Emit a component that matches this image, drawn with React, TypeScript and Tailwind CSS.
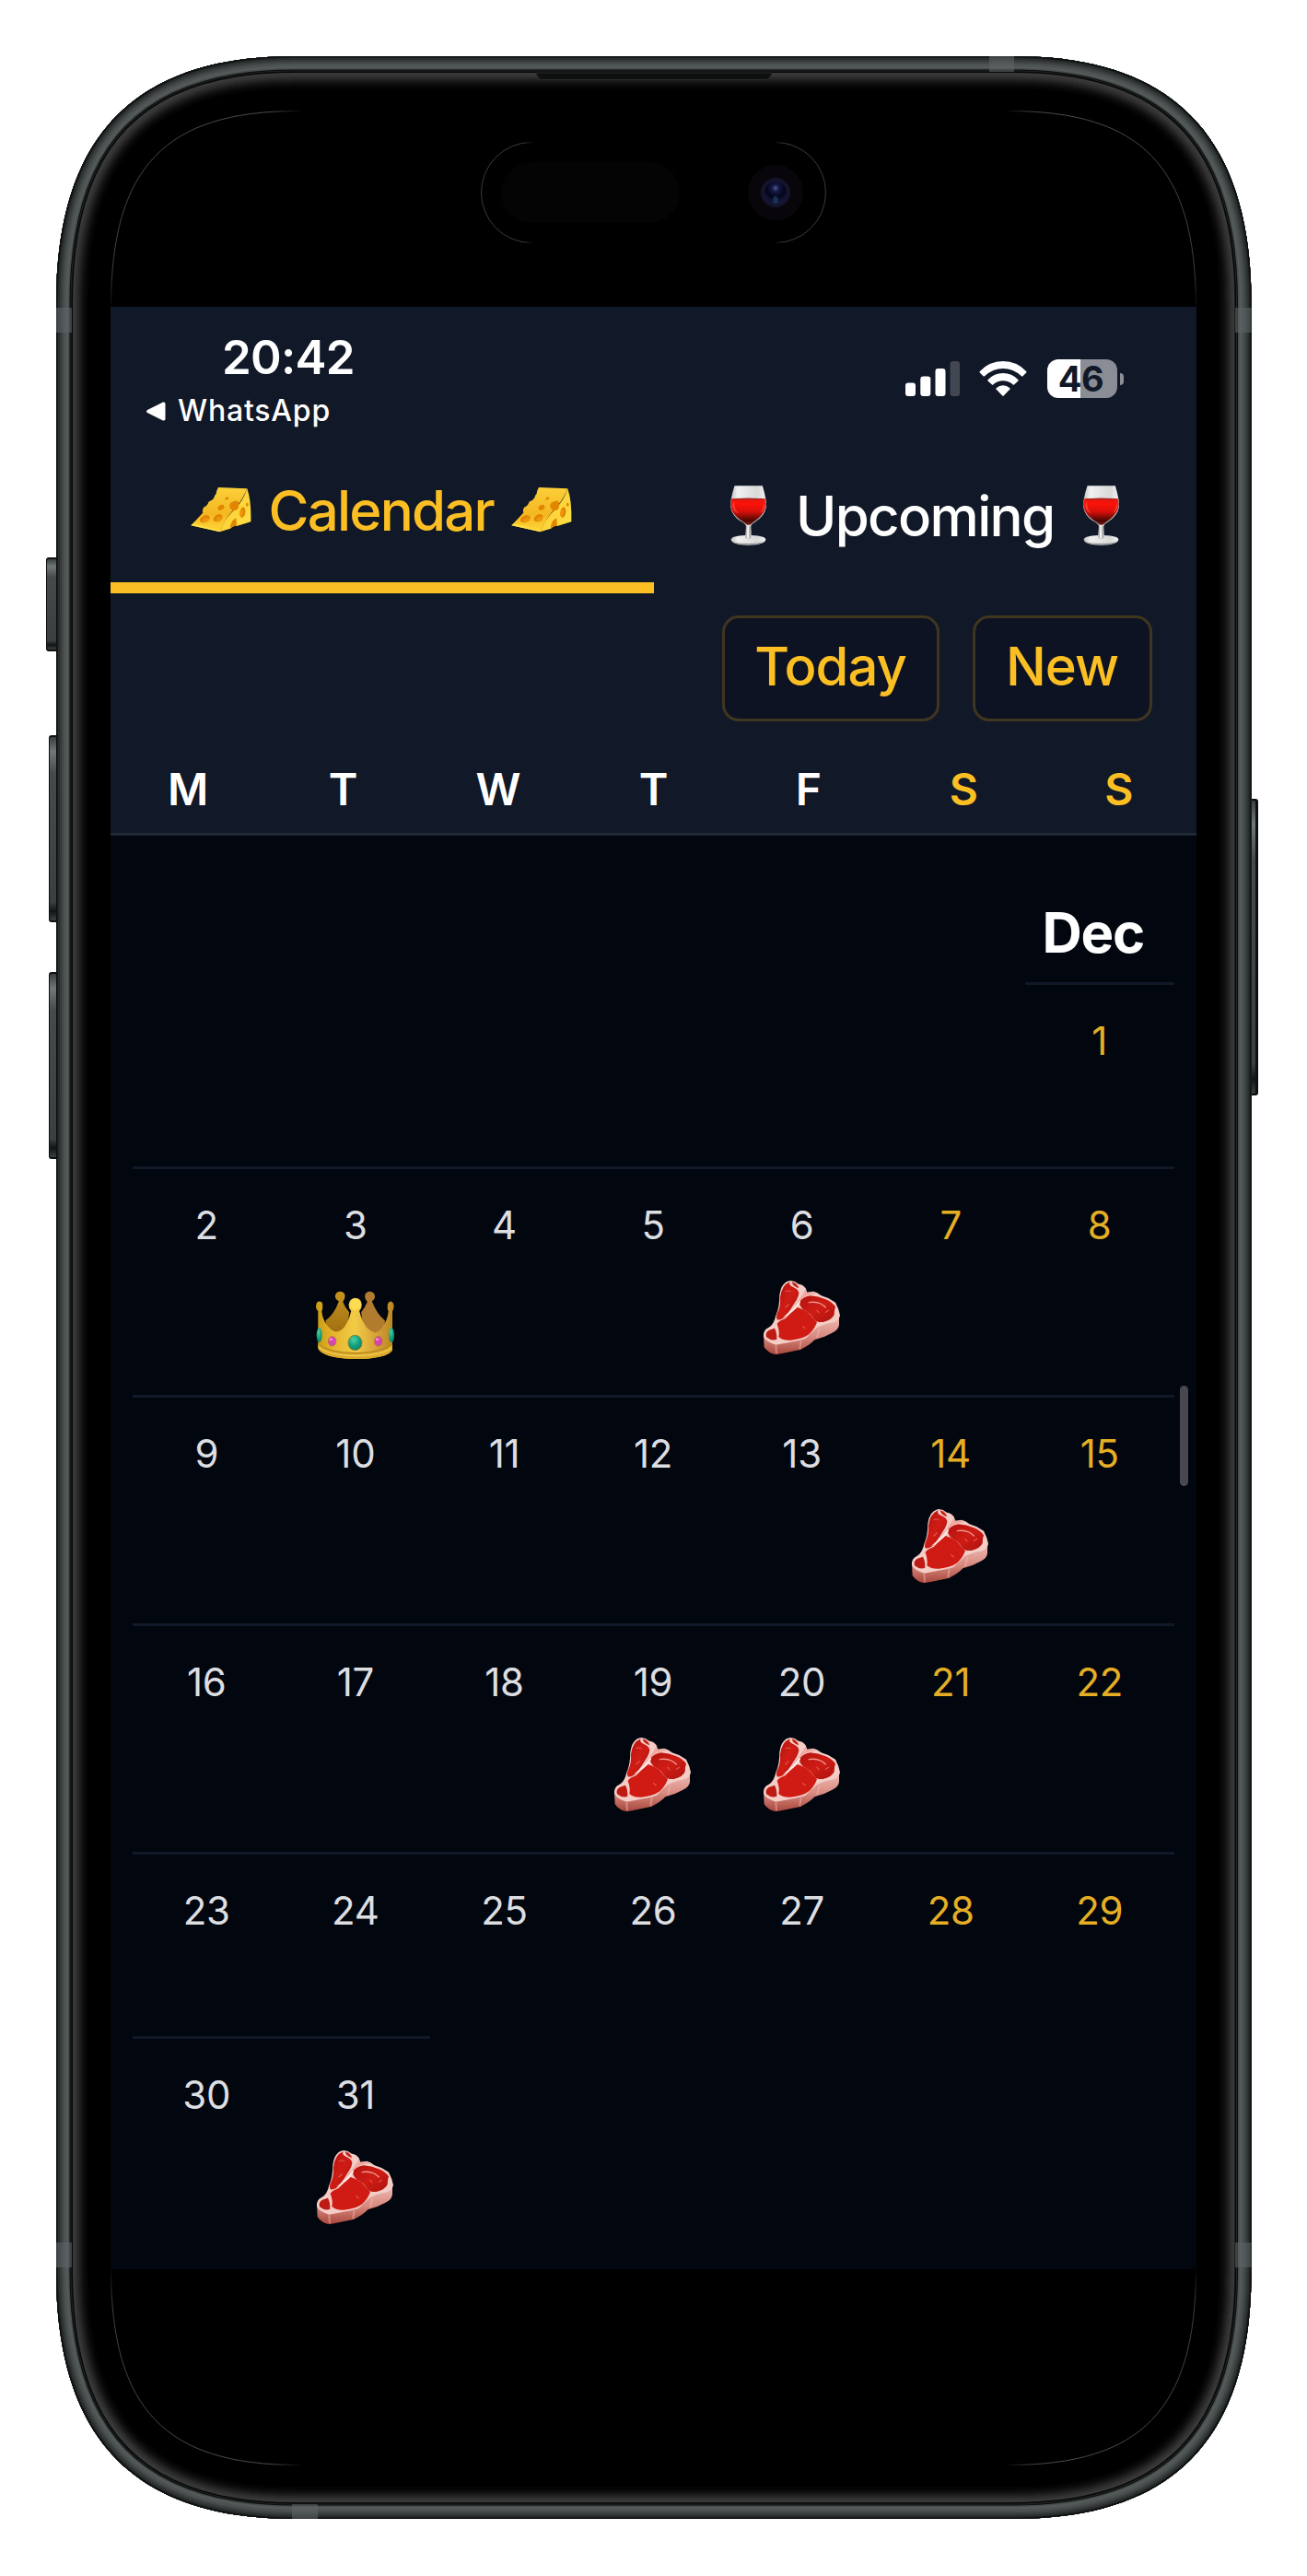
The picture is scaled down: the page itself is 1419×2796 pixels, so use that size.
import React from "react";

/* ---------- emoji style drawings ---------- */

function Cheese() {
  return (
    <svg className="h-[51px] w-[68px] shrink-0" viewBox="18 42 204 152" preserveAspectRatio="none">
      <defs>
        <linearGradient id="ch1" x1="0" y1="0" x2="0" y2="1">
          <stop offset="0" stopColor="#fbd03a" />
          <stop offset=".6" stopColor="#f5b721" />
          <stop offset="1" stopColor="#ffd737" />
        </linearGradient>
        <linearGradient id="ch2" x1="0" y1="0" x2="1" y2="1">
          <stop offset="0" stopColor="#fdc52b" />
          <stop offset="1" stopColor="#ffe24a" />
        </linearGradient>
      </defs>
      <path d="M111 45L205 49Q190 88 160 118Q135 142 116 189L22 168Q40 150 61 127Q57 120 64 109Q75 106 80 91Q94 86 98 76Q98 72 104 66Q104 58 107 53Z" fill="url(#ch1)" />
      <path d="M205 49Q219 90 217 156L171 170Q160 168 150 178L116 189Q130 148 160 120Q192 90 205 49Z" fill="url(#ch2)" />
      <path d="M22 168L116 189L118 184L30 162Z" fill="#ffdf45" />
      <g fill="#e08600">
        <ellipse cx="67" cy="147" rx="17" ry="11" transform="rotate(-25 67 147)" />
        <ellipse cx="110" cy="144" rx="16" ry="11" transform="rotate(-28 110 144)" />
        <ellipse cx="120" cy="110" rx="11" ry="8" transform="rotate(-30 120 110)" />
        <ellipse cx="139" cy="81" rx="6" ry="4" transform="rotate(-25 139 81)" />
        <path d="M147 104Q150 90 172 88Q182 96 175 114Q165 124 155 118Q147 113 147 104Z" />
        <ellipse cx="190" cy="126" rx="9" ry="17" transform="rotate(10 190 126)" />
        <ellipse cx="205" cy="101" rx="4" ry="6" />
        <path d="M150 172Q152 152 169 144L171 170Q160 167 150 178Z" />
      </g>
      <g fill="#ee9510">
        <ellipse cx="70" cy="151" rx="12" ry="7" transform="rotate(-25 70 151)" />
        <ellipse cx="113" cy="148" rx="11" ry="7" transform="rotate(-28 113 148)" />
        <ellipse cx="187" cy="128" rx="5" ry="12" transform="rotate(10 187 128)" />
      </g>
    </svg>
  );
}

function Wine() {
  return (
    <svg className="h-[67px] w-[41px] shrink-0" viewBox="235 588 104 202" preserveAspectRatio="none">
      <defs>
        <linearGradient id="wg" x1="0" x2="1">
          <stop offset="0" stopColor="#bdbdbd" />
          <stop offset=".2" stopColor="#f1f1f1" />
          <stop offset=".75" stopColor="#d9d9d9" />
          <stop offset="1" stopColor="#f2f2f2" />
        </linearGradient>
        <linearGradient id="wr" x1="0" y1="0" x2="0" y2="1">
          <stop offset="0" stopColor="#e8150d" />
          <stop offset=".2" stopColor="#fb1208" />
          <stop offset=".5" stopColor="#d81009" />
          <stop offset=".85" stopColor="#480603" />
          <stop offset="1" stopColor="#7a1512" />
        </linearGradient>
      </defs>
      <path d="M249 592H326Q338 640 336 662Q332 690 306 710Q296 716 294 724L295 754Q334 756 335 768Q332 785 287 786Q242 785 239 768Q241 756 279 754L281 724Q279 716 266 708Q242 690 238 662Q236 640 249 592Z" fill="url(#wg)" />
      <path d="M238 650Q240 690 281 719H293Q334 690 336 650L330 636H243Z" fill="#74605f" />
      <path d="M241 634H333Q336 655 333 668Q326 690 304 706Q294 714 292 719H283Q280 713 268 705Q246 690 241 668Q238 655 241 634Z" fill="url(#wr)" />
      <ellipse cx="287" cy="635" rx="46" ry="3" fill="#a32a25" />
      <path d="M248 644Q246 668 260 682Q252 680 245 664Q242 652 248 644Z" fill="#ff7066" opacity=".6" />
      <path d="M329 644Q331 664 320 680Q328 676 332 660Z" fill="#ff7066" opacity=".6" />
      <path d="M280 724L279 762Q287 770 295 762L293 724Z" fill="#8f8f8f" opacity=".6" />
      <path d="M284 724L283 764H289L288 724Z" fill="#f4f4f4" />
      <path d="M240 773Q250 784 287 785Q326 784 334 773Q320 781 287 781Q254 781 240 773Z" fill="#8a8a8a" />
    </svg>
  );
}

function Crown() {
  return (
    <svg className="mt-[86px] mr-[2px] h-[75px] w-[87px]" viewBox="124 124 262 226" preserveAspectRatio="none">
      <defs>
        <linearGradient id="cr1" x1="0" x2="1">
          <stop offset="0" stopColor="#c99a12" />
          <stop offset=".2" stopColor="#e3b32c" />
          <stop offset=".5" stopColor="#f2cb45" />
          <stop offset=".8" stopColor="#d39d36" />
          <stop offset="1" stopColor="#b98620" />
        </linearGradient>
        <linearGradient id="cr2" x1="0" y1="0" x2="0" y2="1">
          <stop offset="0" stopColor="#c79420" />
          <stop offset="1" stopColor="#a06f10" />
        </linearGradient>
        <radialGradient id="cg" cx=".4" cy=".3" r=".8">
          <stop offset="0" stopColor="#4fd0a4" />
          <stop offset=".5" stopColor="#14a27c" />
          <stop offset="1" stopColor="#0c7a60" />
        </radialGradient>
      </defs>
      <path d="M158 222Q188 200 202 158Q190 152 190 142Q191 127 206 126Q222 127 222 142Q222 152 215 160Q222 178 236 194L228 260H165Z" fill="url(#cr2)" />
      <path d="M353 222Q326 200 310 158Q320 152 320 142Q318 127 303 126Q288 127 287 142Q287 152 295 160Q288 178 275 194L284 260H348Z" fill="#b17c2e" />
      <path d="M134 190Q127 186 127 175Q128 159 139 159Q150 160 149 176Q149 186 146 191Q148 214 160 232Q176 256 192 258Q226 256 242 190Q234 182 234 170Q236 149 256 147Q276 149 277 170Q277 182 269 190Q286 256 322 260Q338 258 350 234Q362 214 364 191Q360 184 361 174Q362 160 371 159Q381 160 382 175Q381 186 377 191L377 318Q360 346 255 347Q148 344 134 312Z" fill="url(#cr1)" />
      <path d="M134 296Q160 326 256 328Q350 326 377 298V318Q360 346 255 347Q148 344 134 312Z" fill="#dcaa2b" />
      <path d="M134 296Q160 326 256 328Q350 326 377 298" fill="none" stroke="#a87914" strokeWidth="3" />
      <path d="M137 310Q170 336 256 337Q345 335 374 312" fill="none" stroke="#f7d862" strokeWidth="3" />
      <circle cx="256" cy="168" r="19" fill="#fbdc52" />
      <ellipse cx="255" cy="294" rx="23" ry="25" fill="url(#cg)" stroke="#a87a18" strokeWidth="2" />
      <ellipse cx="138" cy="269" rx="9" ry="24" fill="url(#cg)" />
      <ellipse cx="374" cy="269" rx="9" ry="24" fill="url(#cg)" />
      <ellipse cx="180" cy="289" rx="13" ry="16" fill="#d944b4" stroke="#a8731c" strokeWidth="2" />
      <ellipse cx="331" cy="289" rx="13" ry="16" fill="#d944b4" stroke="#a8731c" strokeWidth="2" />
      <ellipse cx="176" cy="283" rx="5" ry="4" fill="#f29bdc" />
      <ellipse cx="327" cy="283" rx="5" ry="4" fill="#f29bdc" />
    </svg>
  );
}

function Steak() {
  return (
    <svg className="mt-[74px] mr-[2px] h-[82px] w-[85px]" viewBox="85 90 255 246" preserveAspectRatio="none">
      <defs>
        <linearGradient id="st1" x1="0" y1="0" x2="0" y2="1">
          <stop offset="0" stopColor="#f2c2bb" />
          <stop offset=".55" stopColor="#d88a80" />
          <stop offset="1" stopColor="#a8463c" />
        </linearGradient>
        <linearGradient id="st2" x1="0" y1="0" x2="1" y2="1">
          <stop offset="0" stopColor="#b3120e" />
          <stop offset=".5" stopColor="#cf1c15" />
          <stop offset="1" stopColor="#ad130e" />
        </linearGradient>
      </defs>
      <path d="M88 270L90 310Q104 330 128 334Q160 328 208 318Q240 302 254 286Q286 278 310 264Q334 252 334 236V206L240 200Z" fill="url(#st1)" />
      <path d="M176 93Q190 94 202 104Q218 106 225 118L230 131L250 128Q262 130 276 142Q300 148 322 164Q334 186 337 206Q334 224 312 230Q290 232 262 246Q242 264 224 282Q200 290 160 296L128 302Q98 294 88 276Q86 254 104 246Q122 236 128 206Q140 180 140 140Q146 96 176 93Z" fill="#f3cdc6" />
      <path d="M174 97Q168 108 184 114Q200 120 203 132Q203 146 189 166Q176 188 162 206Q148 222 132 220Q126 210 136 192Q144 172 142 148Q146 108 174 97Z" fill="url(#st2)" />
      <path d="M180 97Q198 102 203 118Q192 114 184 107Z" fill="#c2241b" />
      <path d="M204 162Q214 147 240 142Q266 144 290 154Q308 160 322 178Q318 190 318 204Q312 220 282 228Q260 230 252 218Q238 196 218 188Q206 178 204 162Z" fill="url(#st2)" />
      <path d="M198 180Q224 188 238 202Q250 218 262 228Q256 248 236 268Q214 284 176 287Q148 288 137 276Q141 258 132 234Q138 224 158 217Q180 194 198 180Z" fill="#d01b14" />
      <path d="M124 248Q132 262 131 284Q114 291 97 277Q92 262 106 254Z" fill="#bd1b14" />
      <path d="M224 122Q216 140 190 170L166 202Q194 180 210 156Q226 138 258 136L250 130L230 132Z" fill="#f0aaa1" />
      <path d="M206 156Q186 184 150 214Q188 196 208 164Z" fill="#fbe6e2" />
      <path d="M236 164Q256 160 274 168Q284 174 290 180" fill="none" stroke="#f0988e" strokeWidth="4" strokeLinecap="round" />
      <path d="M160 128Q168 124 176 128M160 180L170 170M262 190L268 198M216 242L224 248M290 196L300 190" fill="none" stroke="#e2574b" strokeWidth="3.500" strokeLinecap="round" />
      <path d="M128 304L130 330M210 288L206 316M270 248L262 280" stroke="#f3b5ac" strokeWidth="6" opacity=".5" />
    </svg>
  );
}

/* ---------- phone hardware ---------- */

function squircle(l: number, t: number, r: number, b: number, lx: number, ly: number, c: number) {
  return `M${l + lx} ${t}H${r - lx}C${r - c} ${t} ${r} ${t + c} ${r} ${t + ly}V${b - ly}C${r} ${b - c} ${r - c} ${b} ${r - lx} ${b}H${l + lx}C${l + c} ${b} ${l} ${b - c} ${l} ${b - ly}V${t + ly}C${l} ${t + c} ${l + c} ${t} ${l + lx} ${t}Z`;
}

const OUTER = squircle(61, 61, 1358.5, 2734, 258, 268, 86);
const INNER = squircle(78, 78.5, 1341.5, 2717, 238, 248, 80);
const RIM: [number, string][] = [
  [36, "#060707"],
  [33, "#222424"],
  [31, "#0b0c0c"],
  [29, "#474c4c"],
  [26, "#54595a"],
  [21, "#4c5152"],
  [16, "#414647"],
  [12, "#363a3b"],
  [8, "#292d2d"],
  [4, "#191c1c"],
  [2, "#0d0f0f"],
];

function SideButton({ x, y, w, h }: { x: number; y: number; w: number; h: number }) {
  return (
    <g>
      <rect x={x} y={y} width={w + 4} height={h} rx="3" fill="#0d1010" />
      <rect x={x + 1} y={y + 2} width={w} height={h - 4} rx="2" fill="url(#btn)" />
    </g>
  );
}

function Hardware() {
  return (
    <svg className="absolute inset-0" width="1419" height="2796" viewBox="0 0 1419 2796" aria-hidden="true">
      <defs>
        <clipPath id="co"><path d={OUTER} /></clipPath>
        <clipPath id="ci"><path d={INNER} /></clipPath>
        <filter id="gl" x="-5%" y="-5%" width="110%" height="110%"><feGaussianBlur stdDeviation="6" /></filter>
        <linearGradient id="btn" x1="0" y1="0" x2="0" y2="1">
          <stop offset="0" stopColor="#3a4041" />
          <stop offset=".08" stopColor="#70787a" />
          <stop offset=".2" stopColor="#454b4c" />
          <stop offset=".9" stopColor="#3a4041" />
          <stop offset=".95" stopColor="#121515" />
          <stop offset="1" stopColor="#3a4041" />
        </linearGradient>
        <linearGradient id="tl" gradientUnits="userSpaceOnUse" x1="0" y1="120" x2="0" y2="2676">
          <stop offset="0" stopColor="#4a4a4a" />
          <stop offset=".07" stopColor="#3c3c3c" />
          <stop offset=".085" stopColor="#000" />
          <stop offset=".915" stopColor="#000" />
          <stop offset=".93" stopColor="#3c3c3c" />
          <stop offset="1" stopColor="#4a4a4a" />
        </linearGradient>
        <linearGradient id="fadeOut" x1="0" x2="1">
          <stop offset="0" stopColor="#000" stopOpacity="0" />
          <stop offset=".04" stopColor="#000" />
          <stop offset=".96" stopColor="#000" />
          <stop offset="1" stopColor="#000" stopOpacity="0" />
        </linearGradient>
        <radialGradient id="lens" cx=".5" cy=".3" r=".7">
          <stop offset="0" stopColor="#4a5390" />
          <stop offset=".25" stopColor="#12163f" />
          <stop offset=".6" stopColor="#040519" />
          <stop offset="1" stopColor="#171a45" />
        </radialGradient>
      </defs>
      <SideButton x={50} y={605} w={11} h={102} />
      <SideButton x={53} y={798} w={8} h={203} />
      <SideButton x={53} y={1055} w={8} h={203} />
      <SideButton x={1354} y={867} w={8} h={322} />
      <path d={OUTER} fill="#000" />
      <g clipPath="url(#ci)">
        <path d={INNER} fill="none" stroke="#454545" strokeWidth="16" filter="url(#gl)" />
      </g>
      <g clipPath="url(#co)">
        {RIM.map(([w, c]) => (
          <path key={w} d={OUTER} fill="none" stroke={c} strokeWidth={w} />
        ))}
        <g fill="#5f6667" opacity=".55">
          <rect x="1074" y="61" width="27" height="17" />
          <rect x="317" y="2718" width="28" height="17" />
          <rect x="61" y="334" width="17" height="27" />
          <rect x="1341" y="334" width="18" height="27" />
          <rect x="61" y="2434" width="17" height="27" />
          <rect x="1341" y="2434" width="18" height="27" />
        </g>
      </g>
      <path d="M582 79Q584 86 588 86.500H832Q836 86 838 79Z" fill="#0e0f0f" stroke="#2b2b2b" strokeWidth="1" />
      <path d={squircle(120.5, 120.5, 1298.5, 2675.5, 203, 213, 60)} fill="none" stroke="url(#tl)" strokeWidth="1" />
      <rect x="295" y="118" width="829" height="5" fill="url(#fadeOut)" />
      <rect x="295" y="2673" width="829" height="5" fill="url(#fadeOut)" />
      <rect x="522.5" y="154.500" width="374" height="109" rx="54.500" fill="#000" stroke="#3c3c3c" />
      <rect x="568" y="152" width="283" height="114" fill="url(#fadeOut)" />
      <rect x="544" y="176" width="194" height="66" rx="33" fill="#040404" />
      <circle cx="842" cy="209" r="30" fill="#08060a" />
      <circle cx="842" cy="209" r="16" fill="#14152c" />
      <circle cx="842" cy="209" r="12" fill="url(#lens)" />
      <ellipse cx="842" cy="217" rx="3" ry="4" fill="#1c3a5c" opacity=".8" />
    </svg>
  );
}

/* ---------- screen ---------- */

function StatusBar() {
  return (
    <div className="flex h-[142px] justify-between">
      <div className="flex flex-col">
        <div className="mt-[29px] ml-[121px] text-[51px] leading-[52px] font-semibold tracking-[-0.7px]">20:42</div>
        <div className="mt-[15px] ml-[38px] flex h-[34px] items-center gap-[13px]">
          <svg className="h-[21px] w-[22px]" viewBox="0 0 22 21">
            <path d="M2 9Q0 10.500 2 12L19 20.500Q21.500 21 21.500 18.500V2.500Q21.500 0 19 .5Z" fill="#fff" />
          </svg>
          <span className="text-[32px] leading-[32px] font-medium tracking-[0.8px]">WhatsApp</span>
        </div>
      </div>
      <div className="mt-[57px] mr-[79px] flex h-[42px] items-center">
        <svg className="h-[38px] w-[59px]" viewBox="0 0 59 38">
          <rect x="0" y="23.500" width="11" height="14.500" rx="3" fill="#fff" />
          <rect x="16.300" y="16.500" width="11" height="21.500" rx="3" fill="#fff" />
          <rect x="32.500" y="8" width="11" height="30" rx="3" fill="#fff" />
          <rect x="48.500" y="0" width="10.500" height="38" rx="3" fill="#434751" />
        </svg>
        <svg className="ml-[21px] h-[38px] w-[52px]" viewBox="0 0 52 38">
          <g fill="#fff">
            <path d="M.6 11.200Q11 0 26 0T51.400 11.200Q51.800 12 51.200 12.600L47.200 16.400Q46.600 16.800 46 16.200Q37 8 26 8T6 16.200Q5.400 16.800 4.800 16.400L.8 12.600Q.2 12 .6 11.200Z" />
            <path d="M9.500 20.200Q16.500 13 26 13T42.500 20.200Q42.900 20.800 42.400 21.400L38 25.600Q37.400 26 36.800 25.500Q32 21.300 26 21.300T15.200 25.500Q14.600 26 14 25.600L9.600 21.400Q9.100 20.800 9.500 20.200Z" />
            <path d="M18.600 29.300Q22 26.300 26 26.300T33.400 29.300Q33.900 29.900 33.400 30.500L26.700 37.400Q26 38 25.300 37.400L18.600 30.500Q18.100 29.900 18.600 29.300Z" />
          </g>
        </svg>
        <div className="ml-[22px] flex h-[42px] w-[76px] items-center justify-center rounded-[12px] bg-[linear-gradient(to_right,#fff_47%,#8b8d96_47%)] pr-[2px] text-[38px] leading-[42px] font-bold tracking-[-0.5px] text-[#111827]">
          46
        </div>
        <div className="ml-[3px] h-[13px] w-[4.5px] rounded-r-full bg-[#8b8d96]" />
      </div>
    </div>
  );
}

const WEEKDAYS = ["M", "T", "W", "T", "F", "S", "S"];
const EVENTS: Record<number, "crown" | "steak"> = { 3: "crown", 6: "steak", 14: "steak", 19: "steak", 20: "steak", 31: "steak" };
const WEEKS: { days: (number | null)[]; tall: boolean }[] = [
  { days: [null, null, null, null, null, null, 1], tall: false },
  { days: [2, 3, 4, 5, 6, 7, 8], tall: true },
  { days: [9, 10, 11, 12, 13, 14, 15], tall: true },
  { days: [16, 17, 18, 19, 20, 21, 22], tall: true },
  { days: [23, 24, 25, 26, 27, 28, 29], tall: false },
  { days: [30, 31, null, null, null, null, null], tall: true },
];

function Day({ n, weekend }: { n: number; weekend: boolean }) {
  const ev = EVENTS[n];
  return (
    <div className="flex flex-col items-center border-t-3 border-[#111827] pt-[40px]">
      <span className={`mr-px h-[6px] text-[42px] leading-[42px] tracking-[-0.3px] ${weekend ? "text-[#e5ae24]" : "text-[#dddee1]"}`}>{n}</span>
      {ev === "crown" && <Crown />}
      {ev === "steak" && <Steak />}
    </div>
  );
}

export default function App() {
  return (
    <div className="relative h-[2796px] w-[1419px] overflow-hidden bg-white pt-[333px] pl-[120px] font-['Inter',sans-serif]">
      <Hardware />
      <main className="relative h-[2130px] w-[1179px] overflow-hidden bg-[#02060f] text-white">
        <header className="h-[574px] border-b-3 border-[#1f2937] bg-[#111827]">
          <StatusBar />
          <nav className="grid h-[169px] grid-cols-2 text-[60px] leading-[60px] font-medium">
            <div className="flex items-center justify-center gap-[18px] border-b-12 border-[#fbbf24] pr-[2px] text-[#fbbf24]">
              <Cheese />
              <span className="tracking-[-1.8px]">Calendar</span>
              <Cheese />
            </div>
            <div className="flex items-center justify-center gap-[31px]">
              <Wine />
              <span className="tracking-[-1.7px]">Upcoming</span>
              <Wine />
            </div>
          </nav>
          <div className="flex justify-end gap-[36px] pt-[24px] pr-[48px] text-[58px] leading-[58px] font-medium tracking-[-1px] text-[#fbbf24]">
            <button className="h-[115px] w-[236px] rounded-[18px] border-3 border-[#40361f] bg-[#0d1322] pr-[1px] pb-[6px]">Today</button>
            <button className="h-[115px] w-[195px] rounded-[18px] border-3 border-[#40361f] bg-[#0d1322] pr-[1px] pb-[6px]">New</button>
          </div>
          <div className="mt-[50px] grid grid-cols-7 text-center text-[48px] leading-[48px] font-semibold">
            {WEEKDAYS.map((d, i) => (
              <span key={i} className={i > 4 ? "text-[#fbbf24]" : "text-white"}>
                {d}
              </span>
            ))}
          </div>
        </header>
        <section className="px-[24px]">
          <h2 className="flex h-[159px] w-full justify-end pt-[75px] pr-[33px] text-[60px] leading-[60px] font-bold tracking-[-1.3px]">Dec</h2>
          {WEEKS.map((w, i) => (
            <div key={i} className={`grid grid-cols-7 ${w.tall ? "h-[248px]" : "h-[200px]"}`}>
              {w.days.map((n, j) => (n === null ? <div key={j} /> : <Day key={j} n={n} weekend={j > 4} />))}
            </div>
          ))}
        </section>
        <div className="absolute top-[1171px] right-[9px] h-[109px] w-[9px] rounded-full bg-[#484850]" />
      </main>
    </div>
  );
}
